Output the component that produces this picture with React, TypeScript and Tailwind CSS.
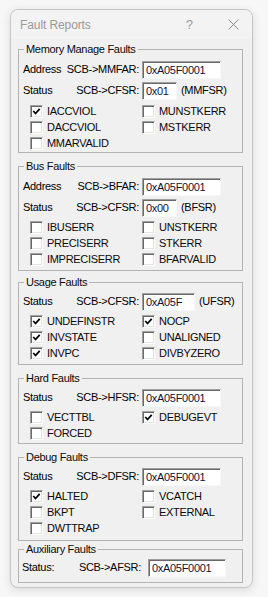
import React from 'react';

type Check = { label: string; on?: boolean };

const font = "font-['Liberation_Sans',Arial,sans-serif]";

function Box({ on }: { on?: boolean }) {
  return (
    <span className="w-[13px] h-[13px] shrink-0 bg-white border border-t-[#a0a0a0] border-l-[#a0a0a0] border-r-white border-b-white shadow-[inset_1px_1px_0_#696969,inset_-1px_-1px_0_#e3e3e3] flex items-center justify-center">
      {on && (
        <svg width="9" height="9" viewBox="0 0 9 9">
          <path d="M1.3 4 L3.5 6.5 L7.7 1.8" fill="none" stroke="#000" strokeWidth="1.8" />
        </svg>
      )}
    </span>
  );
}

function Checks({ rows, className = '' }: { rows: Check[][]; className?: string }) {
  return (
    <div className={`grid grid-cols-[112px_1fr] pl-[11px] ${className}`}>
      {rows.flat().map((c) => (
        <div key={c.label} className="h-[16px] flex items-center gap-[4px] text-[#0a0a0a]">
          <Box on={c.on} />
          <span>{c.label}</span>
        </div>
      ))}
    </div>
  );
}

function Field({ value, width }: { value: string; width: string }) {
  return (
    <div className={`${width} h-[18px] bg-white border border-t-[#a0a0a0] border-l-[#a0a0a0] border-r-[#f7f7f7] border-b-[#f7f7f7] shadow-[inset_1px_1px_0_#696969] pl-[3px] pt-[1px] flex items-center text-[#111133] leading-none`}>
      {value}
    </div>
  );
}

function RegRow({ left, reg, value, width, suffix }: { left: string; reg: string; value: string; width: string; suffix?: string }) {
  return (
    <div className="h-[21px] flex items-center pl-[4px]">
      <div className="w-[116px] flex justify-between">
        <span>{left}</span>
        <span>{reg}</span>
      </div>
      <div className="ml-[3px]">
        <Field value={value} width={width} />
      </div>
      {suffix && <span className="ml-[4px]">{suffix}</span>}
    </div>
  );
}

function Group({ title, className = '', children }: { title: string; className?: string; children: React.ReactNode }) {
  return (
    <fieldset className={`border border-[#b4b4b4] min-w-0 ${className}`}>
      <legend className="ml-[5px] px-[2px] leading-[14px] text-[#0a0a0a]">{title}</legend>
      {children}
    </fieldset>
  );
}

export default function App() {
  return (
    <div className={`w-[268px] h-[597px] bg-[#f7f7f7] pt-[9px] pl-[10px] text-[11px] tracking-[-0.3px] ${font}`}>
      <div className="w-[243px] h-[579px] bg-[#f0f0f0] border border-[#c6c6c6] rounded-[8px] shadow-[0_2px_8px_rgba(0,0,0,0.12)] flex flex-col">
        {/* title bar */}
        <div className="h-[29px] flex items-center pl-[9px] pr-[13px] text-[12px] tracking-[-0.1px] text-[#9a9a9a] bg-[#f3f3f3] rounded-t-[8px]">
          <span className="flex-1">Fault Reports</span>
          <span className="mr-[35px] text-[13px]">?</span>
          <svg width="11" height="11" viewBox="0 0 11 11">
            <path d="M0.5 0.5 L10.5 10.5 M10.5 0.5 L0.5 10.5" stroke="#8a8a8a" strokeWidth="1" />
          </svg>
        </div>

        <div className="pl-[7px] w-[232px] text-black">
          <Group title="Memory Manage Faults" className="mt-[3px] pb-[1px]">
            <div className="pt-[3px]">
              <RegRow left="Address" reg="SCB->MMFAR:" value="0xA05F0001" width="w-[79px]" />
              <RegRow left="Status" reg="SCB->CFSR:" value="0x01" width="w-[35px]" suffix="(MMFSR)" />
            </div>
            <Checks
              className="mt-[2px]"
              rows={[
                [{ label: 'IACCVIOL', on: true }, { label: 'MUNSTKERR' }],
                [{ label: 'DACCVIOL' }, { label: 'MSTKERR' }],
                [{ label: 'MMARVALID' }],
              ]}
            />
          </Group>

          <Group title="Bus Faults" className="mt-[6px] pb-[3px]">
            <div className="pt-[3px]">
              <RegRow left="Address" reg="SCB->BFAR:" value="0xA05F0001" width="w-[79px]" />
              <RegRow left="Status" reg="SCB->CFSR:" value="0x00" width="w-[35px]" suffix="(BFSR)" />
            </div>
            <Checks
              className="mt-[1px]"
              rows={[
                [{ label: 'IBUSERR' }, { label: 'UNSTKERR' }],
                [{ label: 'PRECISERR' }, { label: 'STKERR' }],
                [{ label: 'IMPRECISERR' }, { label: 'BFARVALID' }],
              ]}
            />
          </Group>

          <Group title="Usage Faults" className="mt-[4px] pb-[3px]">
            <div className="pt-[2px]">
              <RegRow left="Status" reg="SCB->CFSR:" value="0xA05F" width="w-[53px]" suffix="(UFSR)" />
            </div>
            <Checks
              className="mt-[1px]"
              rows={[
                [{ label: 'UNDEFINSTR', on: true }, { label: 'NOCP', on: true }],
                [{ label: 'INVSTATE', on: true }, { label: 'UNALIGNED' }],
                [{ label: 'INVPC', on: true }, { label: 'DIVBYZERO' }],
              ]}
            />
          </Group>

          <Group title="Hard Faults" className="mt-[6px] pb-[2px]">
            <div className="pt-[2px]">
              <RegRow left="Status" reg="SCB->HFSR:" value="0xA05F0001" width="w-[79px]" />
            </div>
            <Checks
              className="mt-[1px]"
              rows={[
                [{ label: 'VECTTBL' }, { label: 'DEBUGEVT', on: true }],
                [{ label: 'FORCED' }],
              ]}
            />
          </Group>

          <Group title="Debug Faults" className="mt-[6px] pb-[4px]">
            <div className="pt-[2px]">
              <RegRow left="Status" reg="SCB->DFSR:" value="0xA05F0001" width="w-[79px]" />
            </div>
            <Checks
              className="mt-[1px]"
              rows={[
                [{ label: 'HALTED', on: true }, { label: 'VCATCH' }],
                [{ label: 'BKPT' }, { label: 'EXTERNAL' }],
                [{ label: 'DWTTRAP' }],
              ]}
            />
          </Group>

          <Group title="Auxiliary Faults" className="mt-[1px] pb-[4px]">
            <div className="pt-[1px] h-[22px] flex items-center pl-[3px]">
              <div className="w-[119px] flex justify-between">
                <span>Status:</span>
                <span>{'SCB->AFSR:'}</span>
              </div>
              <div className="ml-[7px]">
                <Field value="0xA05F0001" width="w-[78px]" />
              </div>
            </div>
          </Group>
        </div>
      </div>
    </div>
  );
}
